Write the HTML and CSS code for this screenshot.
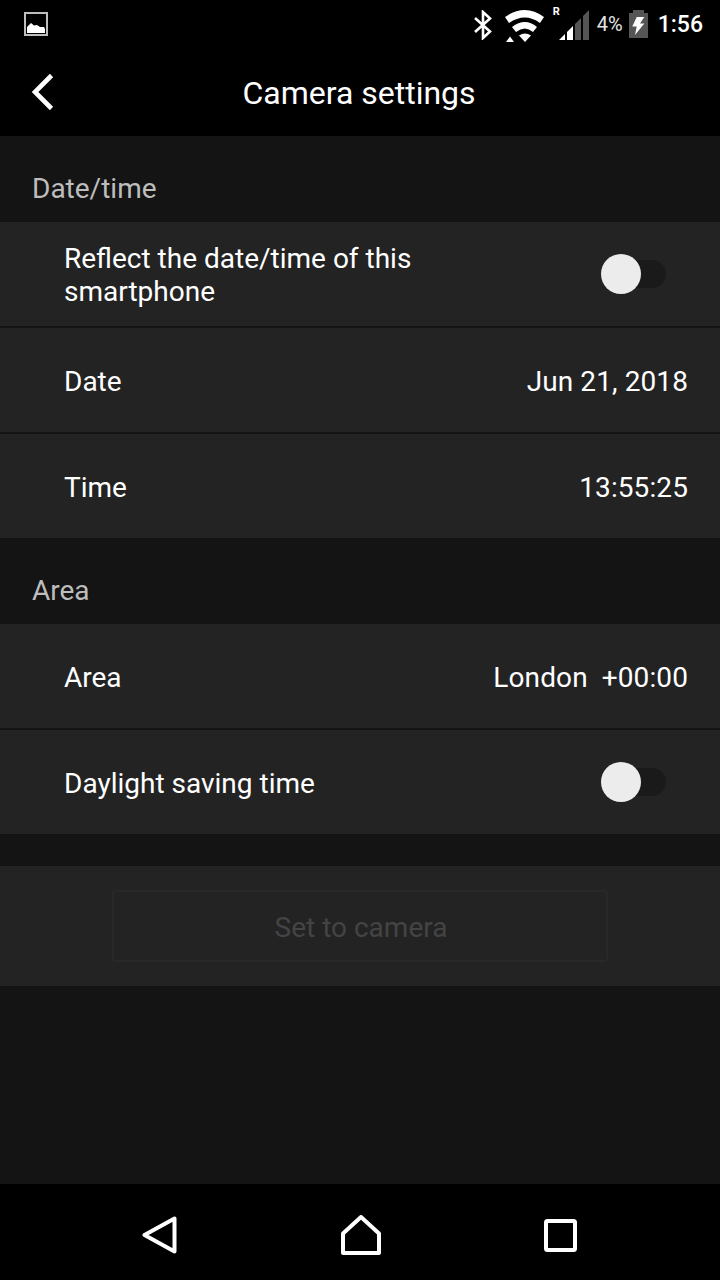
FILE: index.html
```html
<!DOCTYPE html>
<html lang="en">

<head>
    <meta charset="UTF-8">
    <meta name="viewport" content="width=device-width, initial-scale=1.0">
    <title>Camera settings</title>
    <link rel="stylesheet" href="styles.css">
</head>

<body>
    <div class="statusbar">
        <svg class="icon-picture" width="24" height="24" viewBox="0 0 24 24">
            <rect x="1" y="1" width="22" height="22" fill="none" stroke="#bdbdbd" stroke-width="2" />
            <path d="M3 21V15L7 11L10 13.500L13 13L16 15L20 15L21 17V21Z" fill="#fff" />
        </svg>
        <div class="status-right">
            <svg class="icon-bt" width="18" height="30" viewBox="0 0 18 30">
                <path d="M1 8L16 21.500L9 28V2L16 8.500L1 22" fill="none" stroke="#fff" stroke-width="2.600" />
            </svg>
            <svg class="icon-wifi" width="39" height="32" viewBox="0 0 39 32">
                <path d="M0 7Q20 -7 39 7L35 13Q20 2 4 13Z" fill="#fff" />
                <path d="M7 17Q20 7 32 17L28 22Q20 15 11 22Z" fill="#fff" />
                <path d="M14 25.500Q20 21.500 26 25.500L20 32Z" fill="#fff" />
                <path d="M1 32L5 26.500L9 32Z" fill="#fff" />
            </svg>
            <div class="icon-signal">
                <span class="roaming">R</span>
                <svg width="30" height="30" viewBox="0 0 30 30">
                    <path d="M0 30L6 24V30Z" fill="#fff" />
                    <path d="M8 30V22L14 16V30Z" fill="#fff" />
                    <path d="M16 30V14L22 8V30Z" fill="#555" />
                    <path d="M24 30V6L30 0V30Z" fill="#555" />
                </svg>
            </div>
            <span class="battery-pct">4%</span>
            <svg class="icon-battery" width="19" height="28" viewBox="0 0 19 28">
                <path d="M4 0H15V3H19V28H0V3H4Z" fill="#555" />
                <path d="M7.700 7H15.300L11 13.500H15.300L6 25L7.700 16.500H3.300Z" fill="#fff" />
            </svg>
            <span class="clock">1:56</span>
        </div>
    </div>

    <div class="toolbar">
        <svg class="back" width="26" height="40" viewBox="0 0 26 40">
            <path d="M21.500 3.500L5 20L21.500 36.500" fill="none" stroke="#fff" stroke-width="4.600" />
        </svg>
        <h1 class="toolbar-title">Camera settings</h1>
    </div>

    <div class="content">
        <div class="section-head">Date/time</div>
        <div class="rows">
            <div class="row">
                <span class="row-label">Reflect the date/time of this<br>smartphone</span>
                <div class="switch">
                    <div class="switch-knob"></div>
                </div>
            </div>
            <div class="row">
                <span class="row-label">Date</span>
                <span class="row-value">Jun 21, 2018</span>
            </div>
            <div class="row">
                <span class="row-label">Time</span>
                <span class="row-value">13:55:25</span>
            </div>
        </div>

        <div class="section-head">Area</div>
        <div class="rows">
            <div class="row">
                <span class="row-label">Area</span>
                <span class="row-value row-value-pre">London  +00:00</span>
            </div>
            <div class="row">
                <span class="row-label">Daylight saving time</span>
                <div class="switch">
                    <div class="switch-knob"></div>
                </div>
            </div>
        </div>

        <div class="action-panel">
            <button class="set-btn" disabled>Set to camera</button>
        </div>
    </div>

    <div class="navbar">
        <svg width="36" height="38" viewBox="0 0 36 38">
            <path d="M2.500 19L32.500 2.500V35.500Z" fill="none" stroke="#fff" stroke-width="4" stroke-linejoin="round" />
        </svg>
        <svg width="40" height="40" viewBox="0 0 40 40">
            <path d="M20 2L38 18.500V38H2V18.500Z" fill="none" stroke="#fff" stroke-width="4" stroke-linejoin="round" />
        </svg>
        <svg width="33" height="33" viewBox="0 0 33 33">
            <rect x="2" y="2" width="29" height="29" rx="1.500" fill="none" stroke="#fff" stroke-width="4" />
        </svg>
    </div>
</body>

</html>
```

FILE: styles.css
```css
* {
    box-sizing: border-box;
}

html,
body {
    height: 100%;
}

body {
    font-family: Roboto, "Noto Sans", sans-serif;
    background-color: #141414;
    color: #ffffff;
    margin: 0;
    display: flex;
    flex-direction: column;
    height: 1280px;
    overflow: hidden;
}

.statusbar {
    height: 48px;
    flex: none;
    background-color: #000000;
    display: flex;
    align-items: flex-start;
    justify-content: space-between;
    padding: 0 17px 0 24px;
}

.icon-picture {
    display: block;
    margin-top: 12px;
}

.status-right {
    display: flex;
    align-items: flex-start;
}

.icon-bt {
    margin-top: 10px;
    margin-right: 13px;
}

.icon-wifi {
    margin-top: 10px;
    margin-right: 15px;
}

.icon-signal {
    position: relative;
    width: 30px;
    height: 30px;
    margin-top: 10px;
    margin-right: 8px;
}

.icon-signal svg {
    display: block;
}

.roaming {
    position: absolute;
    left: -6px;
    top: -4px;
    font-size: 11px;
    font-weight: 700;
    line-height: 11px;
}

.battery-pct {
    font-size: 20px;
    line-height: 24px;
    margin-top: 12px;
    color: #e4e4e4;
    margin-right: 6px;
}

.icon-battery {
    margin-top: 10px;
    margin-right: 10px;
}

.clock {
    font-size: 23px;
    line-height: 28px;
    margin-top: 11px;
    font-weight: 500;
}

.toolbar {
    height: 88px;
    flex: none;
    background-color: #000000;
    position: relative;
    display: flex;
    align-items: center;
    justify-content: center;
    padding: 2px 2px 0 0;
}

.back {
    position: absolute;
    left: 30px;
    top: 24px;
}

.toolbar-title {
    margin: 0;
    font-size: 32px;
    font-weight: 400;
}

.content {
    flex: 1;
}

.section-head {
    height: 86px;
    padding: 35px 0 0 32px;
    font-size: 28px;
    line-height: 36px;
    color: #bdbdbd;
}

.rows {
    display: flex;
    flex-direction: column;
    gap: 2px;
}

.row {
    height: 104px;
    background-color: #232323;
    display: flex;
    align-items: center;
    justify-content: space-between;
    padding: 2px 32px 0 64px;
    font-size: 28px;
    line-height: 33px;
}

.row-value {
    letter-spacing: 0.1px;
}

.row-value-pre {
    white-space: pre;
}

.switch {
    position: relative;
    width: 46px;
    height: 28px;
    background-color: #1a1a1a;
    border-radius: 14px;
    margin-right: 22px;
    margin-top: -2px;
}

.switch-knob {
    position: absolute;
    left: -19px;
    top: -6px;
    width: 40px;
    height: 40px;
    background-color: #ececec;
    border-radius: 50%;
}

.action-panel {
    margin-top: 32px;
    height: 120px;
    background-color: #232323;
    display: flex;
    justify-content: center;
    align-items: center;
}

.set-btn {
    width: 496px;
    height: 72px;
    padding: 3px 0 0 2px;
    background: transparent;
    border: 2px solid #282828;
    border-radius: 4px;
    color: #444444;
    font-family: inherit;
    font-size: 28px;
}

.navbar {
    height: 96px;
    flex: none;
    background-color: #000000;
    position: relative;
    display: flex;
    align-items: center;
    justify-content: space-between;
    padding: 6px 143px 0 142px;
}
```
